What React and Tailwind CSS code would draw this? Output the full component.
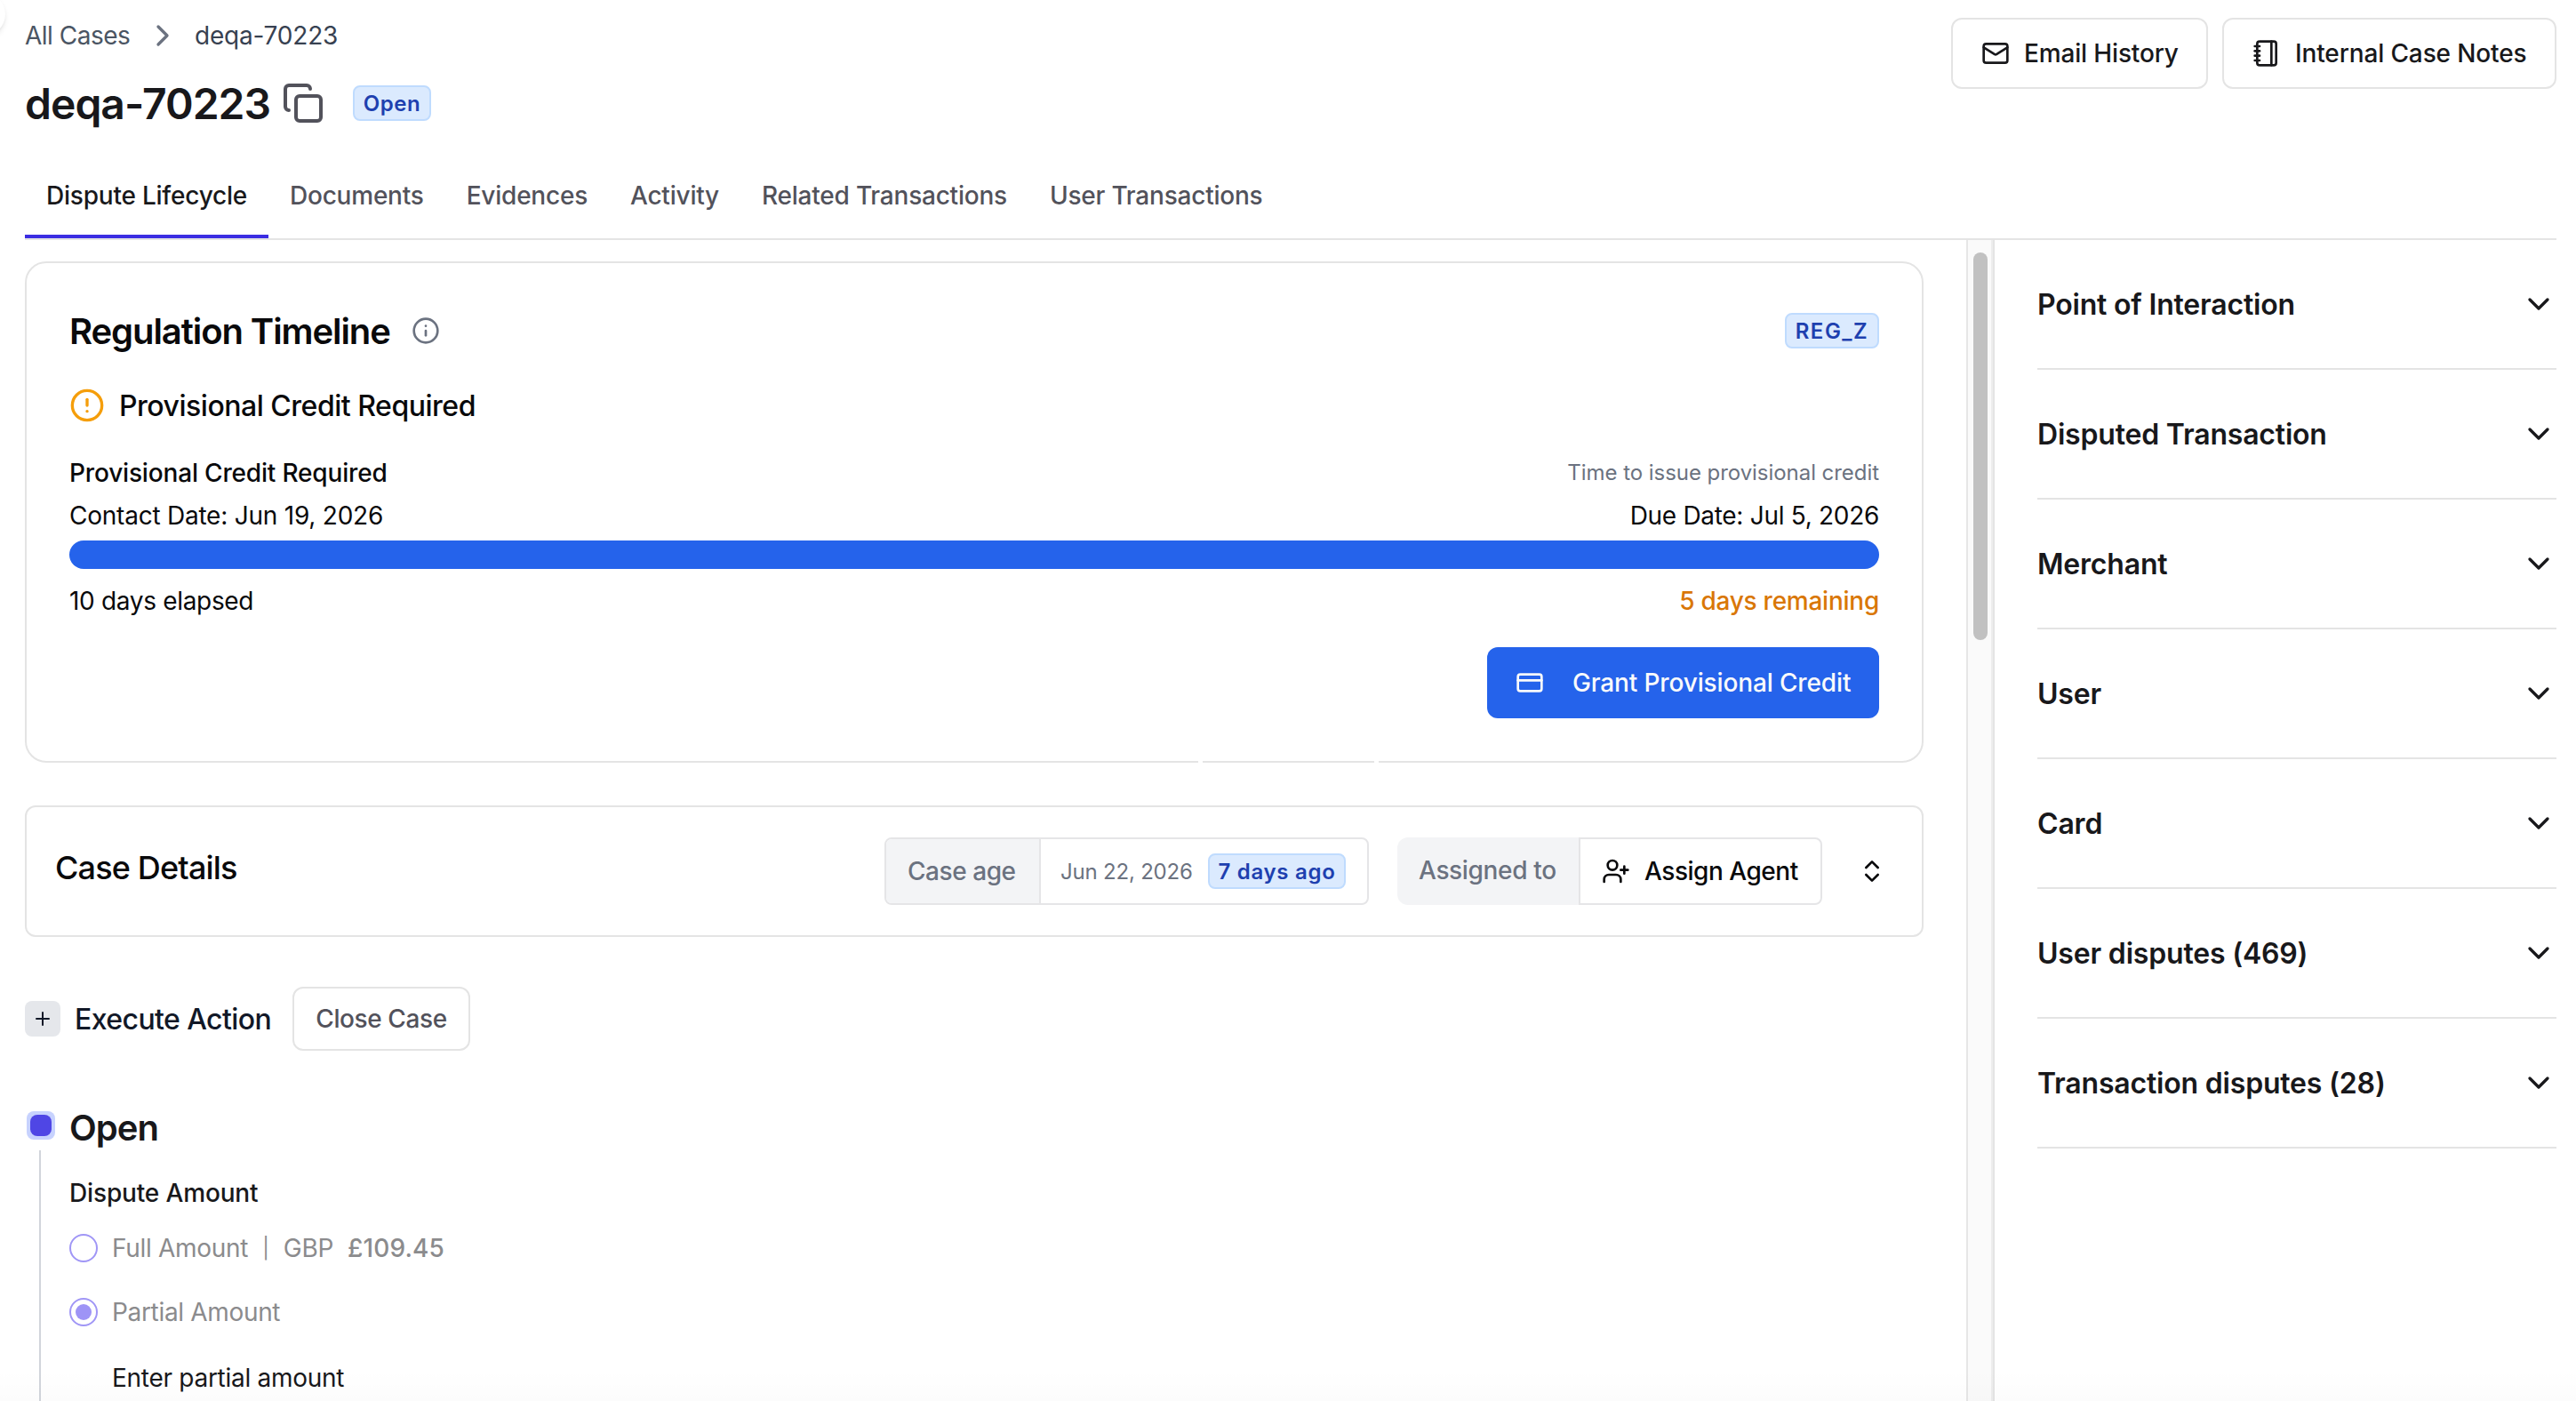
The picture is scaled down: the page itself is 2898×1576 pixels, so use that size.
import React from 'react';
import { ChevronRight, ChevronDown, ChevronsUpDown, Copy, Mail, Notebook, Info, CircleAlert, CreditCard, UserPlus, Plus } from 'lucide-react';

const TABS = [
  { label: 'Dispute Lifecycle', active: true },
  { label: 'Documents' },
  { label: 'Evidences' },
  { label: 'Activity' },
  { label: 'Related Transactions' },
  { label: 'User Transactions' },
];

const SECTIONS = [
  'Point of Interaction',
  'Disputed Transaction',
  'Merchant',
  'User',
  'Card',
  'User disputes (469)',
  'Transaction disputes (28)',
];

function Badge({ children, className = '' }) {
  return (
    <span className={`inline-flex h-10 items-center justify-center rounded-lg border-2 border-[#bfdbfe] bg-[#dbeafe] pt-px text-[24px] font-semibold text-[#1e40af] ${className}`}>
      {children}
    </span>
  );
}

function Header() {
  return (
    <header className="ml-7 flex h-[270px] w-[2848px] shrink-0 flex-col border-b-2 border-[#e4e4e4]">
      <div className="flex h-[172px] items-start justify-between">
        <div className="pt-5">
          <nav className="flex h-10 items-center">
            <span className="w-[135px] tracking-[-0.5px] text-[#4b5563]">All Cases</span>
            <ChevronRight size={40} className="text-[#6b7280]" />
            <span className="ml-4 tracking-[-0.2px] text-[#374151]">deqa-70223</span>
          </nav>
          <div className="mt-[28px] flex h-14 items-center">
            <h1 className="w-[289px] pt-0.5 text-[48px] font-semibold tracking-[-0.98px] text-[#18181b]">deqa-70223</h1>
            <Copy size={48} className="text-[#52525b]" />
            <Badge className="ml-8 w-[88px] tracking-[0.6px]">Open</Badge>
          </div>
        </div>
        <div className="flex gap-4 pt-5 font-medium text-[#18181b]">
          <button className="flex h-20 w-[289px] items-center gap-4 rounded-xl border-2 border-[#e4e4e4] pl-8 whitespace-nowrap tracking-[-0.15px]">
            <Mail size={32} className="shrink-0" />
            Email History
          </button>
          <button className="flex h-20 w-[376px] items-center gap-4 rounded-xl border-2 border-[#e4e4e4] pl-8 whitespace-nowrap tracking-[-0.13px]">
            <Notebook size={32} className="shrink-0" />
            Internal Case Notes
          </button>
        </div>
      </div>
      <div className="flex h-24 font-medium tracking-[-0.22px]">
        {TABS.map((t) => (
          <div
            key={t.label}
            className={
              t.active
                ? 'flex items-center border-b-4 border-[#3b2de2] px-6 pt-1 text-[#18181b]'
                : 'flex items-center border-b-4 border-transparent px-6 pt-1 text-[#52525b]'
            }
          >
            {t.label}
          </div>
        ))}
      </div>
    </header>
  );
}

function RegulationCard() {
  return (
    <section className="relative h-[564px] shrink-0 rounded-3xl border-2 border-[#e4e4e4] px-12 pt-14">
      <div className="flex h-10 items-center justify-between">
        <div className="flex items-center">
          <h2 className="w-[385px] pt-px text-[40px] font-semibold tracking-[-1.08px] whitespace-nowrap">Regulation Timeline</h2>
          <Info size={32} className="text-[#6b7280]" />
        </div>
        <Badge className="w-[106px] tracking-[1.49px]">REG_Z</Badge>
      </div>
      <div className="mt-11 flex h-10 items-center gap-4">
        <CircleAlert size={40} className="text-[#f59e0b]" />
        <span className="pt-px text-[32px] font-medium tracking-[-0.48px]">Provisional Credit Required</span>
      </div>
      <div className="mt-8 flex h-12 items-center justify-between">
        <span className="font-medium tracking-[-0.17px]">Provisional Credit Required</span>
        <span className="text-[24px] tracking-[-0.05px] text-[#6b7280]">Time to issue provisional credit</span>
      </div>
      <div className="flex h-12 items-center justify-between">
        <span className="tracking-[-0.23px]">Contact Date: Jun 19, 2026</span>
        <span className="tracking-[-0.3px]">Due Date: Jul 5, 2026</span>
      </div>
      <div className="mt-1 h-8 rounded-full bg-[#2563eb]" />
      <div className="mt-3 flex h-12 items-center justify-between">
        <span className="tracking-[-0.32px]">10 days elapsed</span>
        <span className="font-medium tracking-[-0.25px] text-[#d97706]">5 days remaining</span>
      </div>
      <div className="mt-7 flex justify-end">
        <button className="flex h-20 w-[441px] items-center rounded-xl bg-[#2563eb] pl-8 font-medium tracking-[-0.14px] whitespace-nowrap text-[#f9fafb]">
          <CreditCard size={32} className="mr-8 shrink-0" />
          Grant Provisional Credit
        </button>
      </div>
      <span className="absolute -bottom-0.5 left-[1318px] h-0.5 w-[5px] bg-white" />
      <span className="absolute -bottom-0.5 left-[1516px] h-0.5 w-[5px] bg-white" />
    </section>
  );
}

function CaseDetails() {
  return (
    <section className="mt-12 flex h-[148px] shrink-0 items-center rounded-xl border-2 border-[#e4e4e4] pl-8 pr-10">
      <h2 className="-mt-2 flex-1 text-[36px] font-medium tracking-[-0.83px]">Case Details</h2>
      <div className="flex h-[76px] w-[545px] rounded-lg border-2 border-[#e5e5e7]">
        <div className="flex w-[174px] items-center rounded-l-md border-r-2 border-[#e5e5e7] bg-[#f3f4f6] pl-6 font-medium tracking-[-0.45px] text-[#6b7280]">Case age</div>
        <div className="flex flex-1 items-center justify-between pr-6 pl-[22px] whitespace-nowrap">
          <span className="pt-px text-[24px] tracking-[-0.2px] text-[#6b7280]">Jun 22, 2026</span>
          <Badge className="w-[155px] tracking-[0.7px]">7 days ago</Badge>
        </div>
      </div>
      <div className="ml-8 flex h-[76px] w-[478px]">
        <div className="flex w-[204px] items-center rounded-l-xl bg-[#f3f4f6] pb-[3px] pl-6 font-medium tracking-[-0.35px] whitespace-nowrap text-[#6b7280]">Assigned to</div>
        <div className="flex flex-1 items-center gap-4 rounded-r-lg border-2 border-[#e5e5e7] pl-6 font-medium tracking-[-0.47px] whitespace-nowrap">
          <UserPlus size={32} className="shrink-0" />
          Assign Agent
        </div>
      </div>
      <ChevronsUpDown size={32} className="ml-10" />
    </section>
  );
}

function Radio({ checked }) {
  return (
    <span className="flex size-8 items-center justify-center rounded-full border-2 border-[#a096f6]">
      {checked && <span className="size-[18px] rounded-full bg-[#9e94f6]" />}
    </span>
  );
}

function Workflow() {
  return (
    <section className="flex min-h-0 flex-1">
      <div className="flex w-[50px] flex-col pt-[68px] pl-0.5">
        <span className="size-8 shrink-0 rounded-lg bg-[#c7d2fe] p-1">
          <span className="block size-6 rounded-lg bg-[#4f46e5]" />
        </span>
        <span className="mt-3 ml-3.5 w-0.5 flex-1 bg-[#d1d5db]" />
      </div>
      <div className="pt-[59px] text-[#18181b]">
        <h2 className="flex h-14 items-center text-[40px] font-semibold tracking-[-0.95px]">Open</h2>
        <div className="mt-[25px] flex h-10 items-center font-medium tracking-[-0.15px]">Dispute Amount</div>
        <div className="mt-[22px] flex h-10 items-center text-[#8b8b8d]">
          <Radio />
          <span className="ml-4 tracking-[-0.3px]">Full Amount</span>
          <span className="ml-4 text-[23px]">|</span>
          <span className="ml-4 tracking-[-0.3px]">GBP</span>
          <span className="ml-4 font-medium tracking-[0.1px]">£109.45</span>
        </div>
        <div className="mt-8 flex h-10 items-center text-[#8b8b8d]">
          <Radio checked />
          <span className="ml-4 tracking-[-0.33px]">Partial Amount</span>
        </div>
        <div className="mt-[34px] ml-12 flex h-10 items-center tracking-[-0.28px]">Enter partial amount</div>
      </div>
    </section>
  );
}

function Sidebar() {
  return (
    <aside className="flex-1 pr-[22px] pl-12">
      {SECTIONS.map((s) => (
        <div key={s} className="flex h-[146px] items-center justify-between border-b-2 border-[#e4e4e4] text-[32px] font-semibold tracking-[-0.19px] text-[#18181b]">
          <span className="pt-0.5">{s}</span>
          <ChevronDown size={40} />
        </div>
      ))}
    </aside>
  );
}

export default function App() {
  return (
    <div className="relative flex h-[1576px] w-[2898px] flex-col overflow-hidden bg-white font-[Inter,sans-serif] text-[28px] leading-10 text-[#09090b]">
      <Header />
      <div className="flex min-h-0 flex-1">
        <main className="flex w-[2212px] shrink-0 flex-col pt-6 pr-12 pl-7">
          <RegulationCard />
          <CaseDetails />
          <div className="mt-14 flex h-[72px] shrink-0 items-center">
            <span className="flex size-10 items-center justify-center rounded-lg bg-[#e5e7eb] text-[#111827]">
              <Plus size={24} />
            </span>
            <span className="ml-4 w-[245px] pt-0.5 text-[32px] font-medium tracking-[-0.58px] text-[#111827]">Execute Action</span>
            <button className="h-[72px] w-[200px] rounded-xl border-2 border-[#e4e4e4] font-medium tracking-[-0.4px] text-[#52525b]">Close Case</button>
          </div>
          <Workflow />
        </main>
        <div className="flex w-8 shrink-0 border-l-2 border-[#e6e6e6]">
          <div className="w-[26px] bg-[#fafafa] px-1.5 pt-3.5">
            <div className="h-[436px] w-4 rounded-full bg-[#c1c1c1]" />
          </div>
          <div className="w-0.5 bg-[#ededed]" />
          <div className="w-0.5 bg-[#e4e4e4]" />
        </div>
        <Sidebar />
      </div>
      <span className="absolute top-[-8px] left-[-42px] size-12 rounded-full bg-white shadow-md" />
      <span className="pointer-events-none absolute inset-x-0 bottom-0 h-9 bg-linear-to-b from-transparent to-black/[0.012]" />
    </div>
  );
}
